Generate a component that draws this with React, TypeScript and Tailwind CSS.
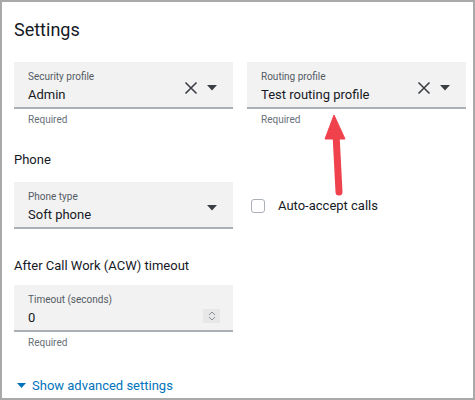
import React from "react";

function ClearIcon() {
  return (
    <svg width="14" height="14" viewBox="0 0 14 14" className="text-[#3b3f45]">
      <path d="M1.5 1.5 L12.5 12.5 M12.5 1.5 L1.5 12.5" stroke="currentColor" strokeWidth="1.6" fill="none" />
    </svg>
  );
}

function Caret() {
  return (
    <svg width="10" height="6" viewBox="0 0 10 6" className="text-[#3b3f45]">
      <path d="M0 0 L10 0 L5 5.5 Z" fill="currentColor" />
    </svg>
  );
}

function Field({ label, value, clearable, children }: {
  label: string;
  value: string;
  clearable?: boolean;
  children?: React.ReactNode;
}) {
  return (
    <div className="h-[47px] bg-[#f2f2f2] border-b-2 border-[#aab0b6] flex items-center pl-[14px] pr-[16px]">
      <div className="flex-1 flex flex-col pt-[5px]">
        <span className="text-[10px] leading-[14px] text-[#545b64]">{label}</span>
        <span className="text-[13px] leading-[20px] text-[#16191f] mt-[1px]">{value}</span>
      </div>
      {children ?? (
        <div className="flex items-center gap-[9px] mt-[6px]">
          {clearable && <ClearIcon />}
          <Caret />
        </div>
      )}
    </div>
  );
}

function Required() {
  return <div className="text-[10px] leading-[14px] text-[#687078] pl-[14px] mt-[4px]">Required</div>;
}

export default function App() {
  return (
    <div
      className="relative w-[475px] h-[400px] bg-white border-2 border-[#a9a9a9] pl-3 pr-[7px] overflow-hidden"
      style={{ fontFamily: "Roboto, 'Open Sans', sans-serif" }}
    >
      <h1 className="text-[18px] leading-[24px] text-[#16191f] mt-[16px]">Settings</h1>

      <div className="grid grid-cols-2 gap-[14px] mt-[20px]">
        <div>
          <Field label="Security profile" value="Admin" clearable />
          <Required />
        </div>
        <div>
          <Field label="Routing profile" value="Test routing profile" clearable />
          <Required />
        </div>
      </div>

      <h2 className="text-[13px] leading-[20px] text-[#16191f] mt-[23px]">Phone</h2>

      <div className="grid grid-cols-2 gap-[14px] mt-[12px]">
        <Field label="Phone type" value="Soft phone" />
        <label className="flex items-center gap-[13px] pl-[4px]">
          <span className="w-[14px] h-[14px] rounded-[3px] border border-[#aab0b6] bg-white" />
          <span className="text-[13px] text-[#16191f]">Auto-accept calls</span>
        </label>
      </div>

      <h2 className="text-[13px] leading-[20px] text-[#16191f] mt-[27px]">After Call Work (ACW) timeout</h2>

      <div className="grid grid-cols-2 gap-[14px] mt-[9px]">
        <div>
          <Field label="Timeout (seconds)" value="0">
            <div className="w-[17px] h-[14px] bg-[#e7e7e8] flex flex-col items-center justify-center mt-[16px] -mr-[3px]">
              <svg width="8" height="10" viewBox="0 0 8 10" className="text-[#879196]">
                <path d="M1 4 L4 1 L7 4 M1 6 L4 9 L7 6" stroke="currentColor" strokeWidth="1" fill="none" />
              </svg>
            </div>
          </Field>
          <Required />
        </div>
      </div>

      <button className="flex items-center gap-[6px] mt-[26px] pl-[3px] text-[#0073bb] text-[13px]">
        <svg width="9" height="6" viewBox="0 0 9 6">
          <path d="M0 0 L9 0 L4.5 5 Z" fill="currentColor" />
        </svg>
        Show advanced settings
      </button>

      <svg className="absolute left-[318px] top-[110px]" width="30" height="84" viewBox="0 0 30 84">
        <path d="M16 22 L19 80" stroke="#f0424c" strokeWidth="7" strokeLinecap="round" fill="none" />
        <path d="M14 3 L25 27 L5 27 Z" fill="#f0424c" strokeLinejoin="round" stroke="#f0424c" strokeWidth="1" />
      </svg>
    </div>
  );
}
